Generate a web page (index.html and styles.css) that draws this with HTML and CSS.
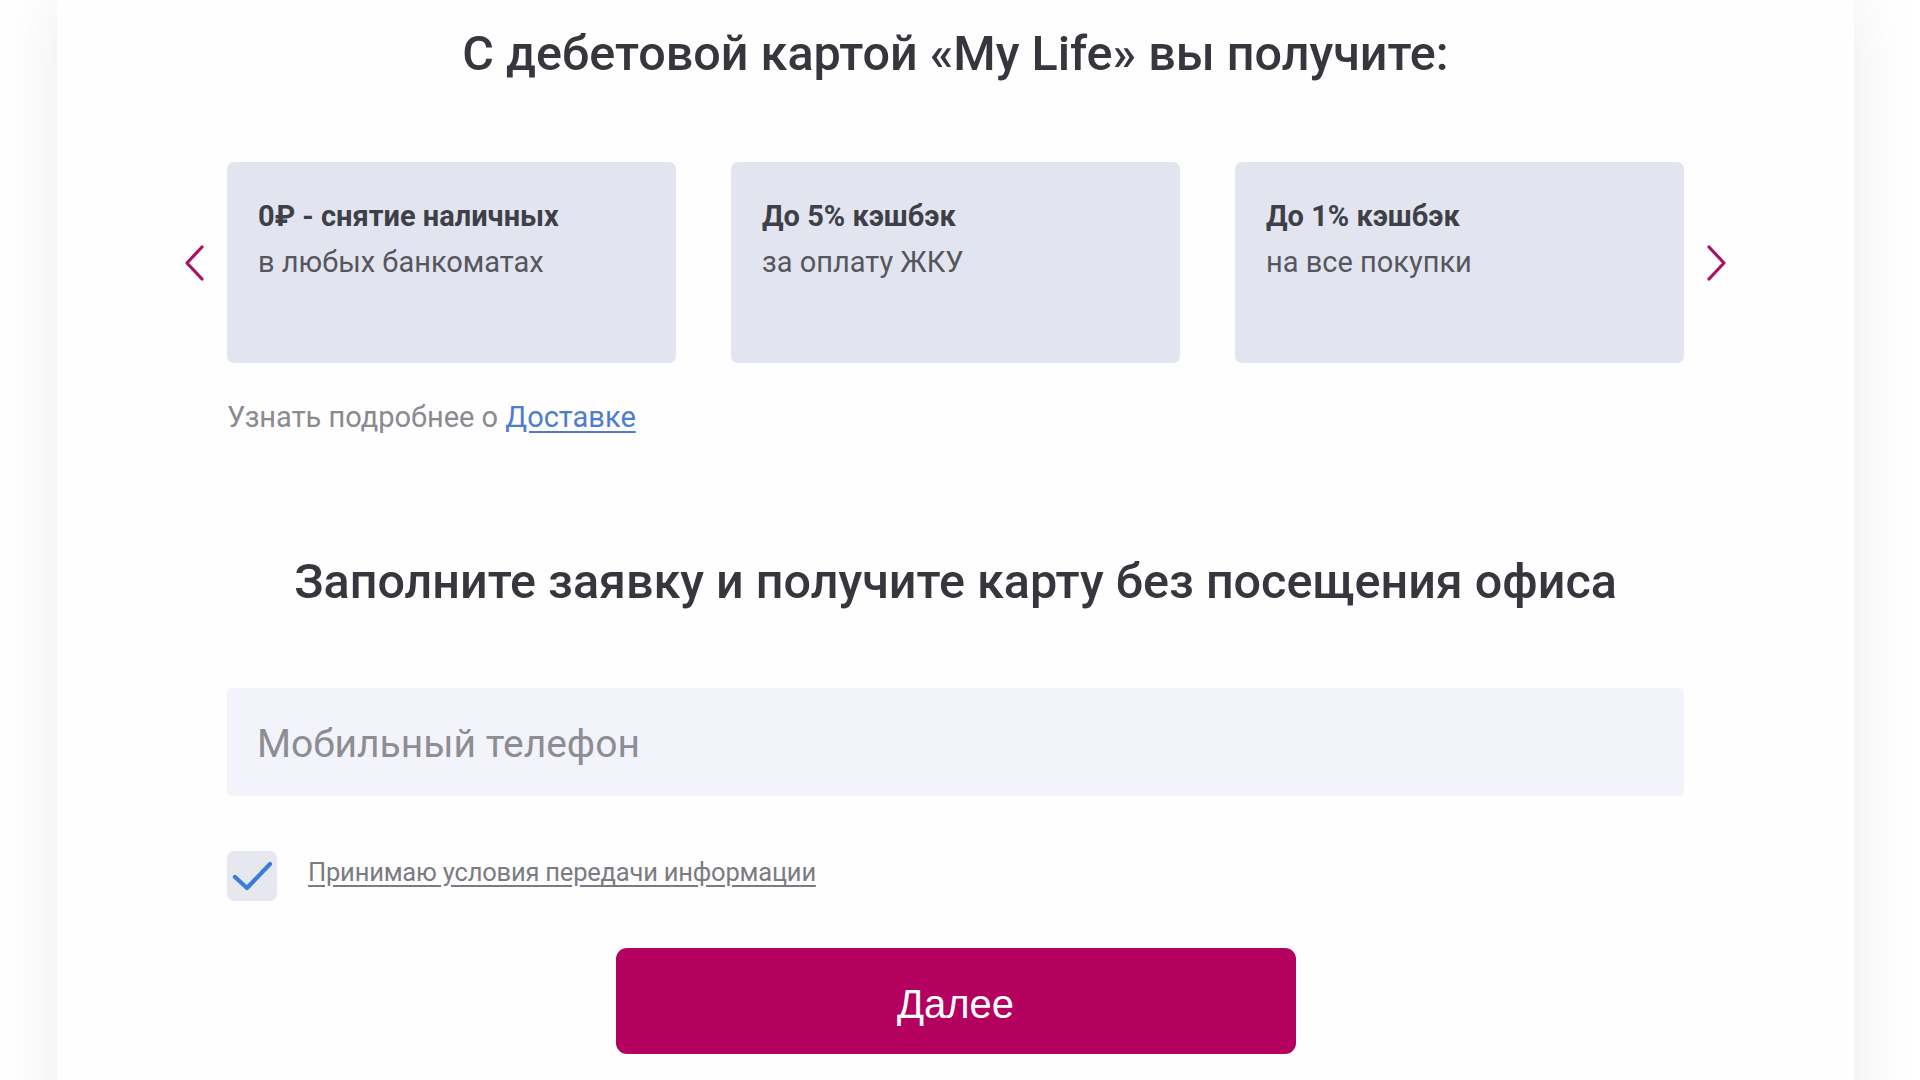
FILE: index.html
```html
<!DOCTYPE html>
<html lang="ru">
<head>
<meta charset="utf-8">
<title>My Life</title>
<link rel="stylesheet" href="styles.css">
</head>
<body>
<div class="page">
  <main class="panel">
    <h2 class="title">С дебетовой картой «My Life» вы получите:</h2>
    <div class="carousel">
      <button class="arrow arrow-left" aria-label="Назад">
        <svg width="22" height="36" viewBox="0 0 22 36"><path d="M19 2 L4 18 L19 34" fill="none" stroke="#a8125f" stroke-width="3.2" stroke-linecap="round" stroke-linejoin="round"/></svg>
      </button>
      <div class="cards">
        <div class="card">
          <div class="card-title">0₽ - снятие наличных</div>
          <div class="card-text">в любых банкоматах</div>
        </div>
        <div class="card">
          <div class="card-title">До 5% кэшбэк</div>
          <div class="card-text">за оплату ЖКУ</div>
        </div>
        <div class="card">
          <div class="card-title">До 1% кэшбэк</div>
          <div class="card-text">на все покупки</div>
        </div>
      </div>
      <button class="arrow arrow-right" aria-label="Вперёд">
        <svg width="22" height="36" viewBox="0 0 22 36"><path d="M3 2 L18 18 L3 34" fill="none" stroke="#a8125f" stroke-width="3.2" stroke-linecap="round" stroke-linejoin="round"/></svg>
      </button>
    </div>
    <div class="more">Узнать подробнее о <a href="#" class="more-link">Доставке</a></div>

    <h2 class="title title-form">Заполните заявку и получите карту без посещения офиса</h2>
    <div class="form">
      <input class="phone" type="text" placeholder="Мобильный телефон">
      <label class="agree">
        <span class="check">
          <svg width="42" height="32" viewBox="0 0 42 32"><path d="M4 17 L16 28 L39 4" fill="none" stroke="#3b7ddb" stroke-width="4.2" stroke-linecap="round" stroke-linejoin="round"/></svg>
        </span>
        <span class="agree-text">Принимаю условия передачи информации</span>
      </label>
      <button class="submit">Далее</button>
    </div>
  </main>
</div>
</body>
</html>
```
FILE: styles.css
```css
html, body {
  margin: 0;
  padding: 0;
  background: #ffffff;
  overflow: hidden;
}
body {
  font-family: Roboto, "Liberation Sans", Arial, sans-serif;
  color: #3a3a42;
}
.page {
  width: 1920px;
  height: 1080px;
  background: #ffffff;
  overflow: hidden;
}
.panel {
  margin-left: 57px;
  width: 1797px;
  min-height: 1200px;
  background: #fefefe;
  box-shadow: 0 0 60px rgba(120, 110, 140, 0.14);
  padding-top: 24px;
  display: flex;
  flex-direction: column;
  align-items: center;
  box-sizing: border-box;
}
.title {
  margin: 0;
  font-size: 48.5px;
  line-height: 60px;
  font-weight: 500;
  color: #36363d;
  text-align: center;
}
.carousel {
  margin-top: 78px;
  display: flex;
  align-items: center;
}
.arrow {
  width: 44px;
  height: 201px;
  padding: 0;
  border: 0;
  background: transparent;
  display: flex;
  align-items: center;
}
.arrow-left { justify-content: flex-start; }
.arrow-right { justify-content: flex-end; }
.cards {
  width: 1457px;
  display: flex;
  gap: 55px;
}
.card {
  width: 449px;
  height: 201px;
  box-sizing: border-box;
  background: #e2e5f0;
  border-radius: 7px;
  padding: 31px 31px 0;
}
.card-title {
  font-size: 29px;
  line-height: 46px;
  font-weight: 700;
  color: #3f3f47;
}
.card-text {
  font-size: 29px;
  line-height: 46px;
  color: #56565e;
}
.more {
  width: 1457px;
  margin-top: 34px;
  font-size: 29px;
  line-height: 40px;
  color: #8a8a90;
}
.more-link {
  color: #4f7ccc;
  text-decoration: underline;
  text-underline-offset: 4px;
}
.title-form {
  margin-top: 115px;
}
.form {
  width: 1457px;
  margin-top: 76px;
  display: flex;
  flex-direction: column;
  align-items: center;
}
.phone {
  width: 100%;
  height: 108px;
  box-sizing: border-box;
  border: 0;
  border-radius: 5px;
  background: #f3f4fb;
  padding: 4px 30px 0;
  font-family: Roboto, "Liberation Sans", Arial, sans-serif;
  font-size: 39px;
  color: #333;
  outline: none;
}
.phone::placeholder {
  color: #8d8d93;
}
.agree {
  align-self: flex-start;
  margin-top: 55px;
  display: flex;
  align-items: center;
  gap: 31px;
}
.check {
  width: 50px;
  height: 50px;
  border-radius: 7px;
  background: #e6e7ef;
  display: flex;
  align-items: center;
  justify-content: center;
}
.agree-text {
  font-size: 25.5px;
  line-height: 40px;
  margin-bottom: 9px;
  color: #7b7b82;
  text-decoration: underline;
  text-underline-offset: 4px;
  letter-spacing: -0.2px;
}
.submit {
  margin-top: 47px;
  width: 680px;
  height: 106px;
  border: 0;
  border-radius: 11px;
  background: #b4005f;
  color: #ffffff;
  font-family: "Liberation Sans", Arial, sans-serif;
  font-size: 40px;
  padding-top: 7px;
  cursor: pointer;
}
```
